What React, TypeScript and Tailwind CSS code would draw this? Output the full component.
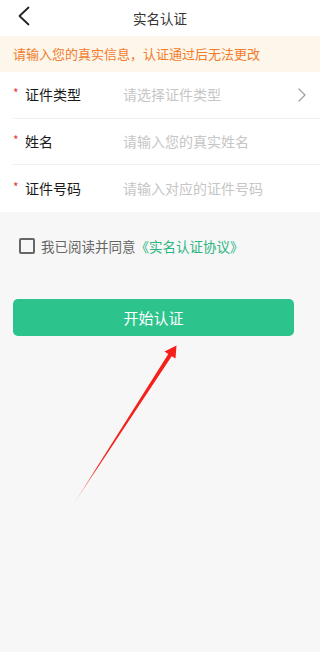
import { ChevronRight } from "lucide-react";

const font = { fontFamily: '"Noto Sans CJK SC", "Noto Sans", sans-serif' };

const fields = [
  { label: "证件类型", placeholder: "请选择证件类型", select: true },
  { label: "姓名", placeholder: "请输入您的真实姓名", select: false },
  { label: "证件号码", placeholder: "请输入对应的证件号码", select: false },
];

function FieldRow({
  label,
  placeholder,
  select,
  last,
}: {
  label: string;
  placeholder: string;
  select: boolean;
  last: boolean;
}) {
  return (
    <div className="pl-[13px]">
      <div
        className={`flex h-[46.7px] items-center pr-[13px] ${
          last ? "" : "border-b border-[#f1f1f1]"
        }`}
      >
        <span className="w-[12px] -translate-y-[2px] text-[12px] leading-none text-[#e8373a]">
          *
        </span>
        <span className="w-[98px] text-[14px] text-[#1a1a1a]">{label}</span>
        <span className="flex-1 text-[14px] text-[#c6c6c6]">{placeholder}</span>
        {select && (
          <ChevronRight size={24} strokeWidth={1.3} className="-mr-[7px] text-[#a0a0a0]" />
        )}
      </div>
    </div>
  );
}

export default function App() {
  return (
    <div className="relative min-h-[652px] w-full bg-[#f7f7f7]" style={font}>
      {/* header */}
      <div className="grid h-[36px] grid-cols-[44px_1fr_44px] items-center bg-white">
        <svg width="44" height="36" viewBox="0 0 44 36" className="text-[#222]">
          <polyline
            points="28.5,7.5 19.5,16 28.5,24.5"
            fill="none"
            stroke="currentColor"
            strokeWidth="1.8"
            strokeLinecap="round"
            strokeLinejoin="round"
          />
        </svg>
        <span className="text-center text-[13.5px] text-[#333]">实名认证</span>
        <span />
      </div>

      {/* notice */}
      <div className="flex h-[36px] items-center bg-[#fdf6ea] px-[13px] text-[13px] text-[#f27b2c]">
        请输入您的真实信息，认证通过后无法更改
      </div>

      <div className="bg-white">
        {fields.map((f, i) => (
          <FieldRow key={f.label} {...f} last={i === fields.length - 1} />
        ))}
      </div>

      {/* agreement */}
      <div className="mt-[24px] flex items-center pl-[19px]">
        <span className="h-[16px] w-[16px] rounded-[2px] border-2 border-[#666]" />
        <span className="ml-[6px] text-[13.5px] text-[#666]">
          我已阅读并同意
          <span className="text-[#2bb57f]">《实名认证协议》</span>
        </span>
      </div>

      <button
        type="button"
        className="mx-[13px] mt-[43px] flex h-[37px] w-[281px] items-center justify-center rounded-[5px] bg-[#2dc38c] text-[15px] text-white"
      >
        开始认证
      </button>

      {/* annotation arrow */}
      <svg
        className="pointer-events-none absolute left-0 top-0"
        width="307"
        height="652"
        viewBox="0 0 307 652"
      >
        <defs>
          <linearGradient id="arrowFade" x1="73" y1="505" x2="176" y2="346" gradientUnits="userSpaceOnUse">
            <stop offset="0" stopColor="#f5201a" stopOpacity="0.25" />
            <stop offset="0.25" stopColor="#f5201a" />
            <stop offset="1" stopColor="#f5201a" />
          </linearGradient>
        </defs>
        <polygon
          points="73,505 168.3,354 164.5,351.5 176.5,345.5 175.5,358.5 171.7,356.2"
          fill="url(#arrowFade)"
        />
      </svg>
    </div>
  );
}
